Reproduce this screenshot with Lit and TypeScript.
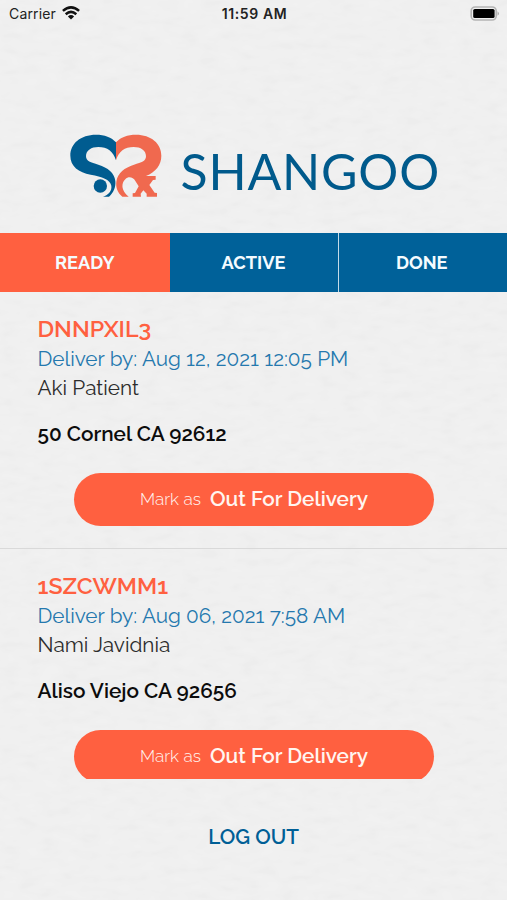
import { LitElement, html, css, svg } from "lit";
import { customElement, property, state } from "lit/decorators.js";

interface Order {
  code: string;
  due: string;
  patient: string;
  address: string;
}

const ORDERS: Order[] = [
  { code: "DNNPXIL3", due: "Aug 12, 2021 12:05 PM", patient: "Aki Patient", address: "50 Cornel CA 92612" },
  { code: "1SZCWMM1", due: "Aug 06, 2021 7:58 AM", patient: "Nami Javidnia", address: "Aliso Viejo CA 92656" },
];

@customElement("order-card")
export class OrderCard extends LitElement {
  @property({ attribute: false }) order!: Order;

  static styles = css`
    :host {
      display: block;
      box-sizing: border-box;
      height: 257px;
      padding: 22.2px 37.5px 0;
      border-bottom: 1px solid #d9d9d9;
      font-size: 20.75px;
      line-height: 29.3px;
      font-variant-numeric: oldstyle-nums;
      white-space: nowrap;
    }
    .code { color: #ff6040; font-size: 23.2px; line-height: 29.9px; font-weight: 600; }
    .due { color: #2478ae; }
    .patient { color: #2c2c2c; }
    .address { margin-top: 16.9px; color: #0c0c0c; font-weight: 600; }
    .mark {
      display: flex;
      align-items: center;
      justify-content: center;
      gap: 9px;
      width: 360px;
      height: 53px;
      margin: 24.6px 0 0 36.5px;
      padding: 0 0 2px;
      border: 0;
      border-radius: 27px;
      background: #ff6040;
      color: #fff5f0;
      font: inherit;
    }
    .lead { font-size: 17.2px; font-weight: 300; padding-top: 2px; }
    .status { font-weight: 600; }
  `;

  render() {
    const o = this.order;
    return html`
      <div class="code">${o.code}</div>
      <div class="due">Deliver by: ${o.due}</div>
      <div class="patient">${o.patient}</div>
      <div class="address">${o.address}</div>
      <button class="mark"><span class="lead">Mark as</span><span class="status">Out For Delivery</span></button>
    `;
  }
}

@customElement("app-root")
export class AppRoot extends LitElement {
  @state() private tab = "READY";

  static styles = css`
    :host {
      display: flex;
      flex-direction: column;
      position: relative;
      isolation: isolate;
      width: 507px;
      height: 900px;
      overflow: hidden;
      background: #f1f1f1;
      font-family: Raleway, Lato, "Open Sans", sans-serif;
    }
    .paper { position: absolute; inset: 0; z-index: -1; width: 100%; height: 100%; opacity: 0.013; }
    .status {
      display: grid;
      grid-template-columns: 1fr auto 1fr;
      align-items: center;
      height: 28px;
      padding: 0 7px 0 9px;
      font-family: Inter, sans-serif;
      font-size: 14px;
      color: #222;
    }
    .carrier { display: flex; align-items: center; gap: 6px; letter-spacing: 0.15px; margin-top: -1px; }
    .wifi { margin-top: -1px; }
    .clock { font-weight: 600; letter-spacing: 0.6px; margin-top: -1px; }
    .battery { justify-self: end; margin-top: -2px; }
    .brand { display: flex; height: 205px; padding-left: 60px; box-sizing: border-box; }
    .mark { margin-top: 97px; width: 110px; height: 80px; }
    .name {
      margin: 112.5px 0 0 10.5px;
      font-family: Lato, Raleway, sans-serif;
      font-size: 50px;
      line-height: 60px;
      letter-spacing: 0.8px;
      color: #005a8c;
    }
    .tabs { display: grid; grid-template-columns: 169.5px 168px 169.5px; height: 58.5px; }
    .tab {
      border: 0;
      padding: 1px 0 0;
      background: #006199;
      color: #f4fbff;
      font: 700 18.2px/58px Raleway, Lato, sans-serif;
    }
    .tab.on { background: #ff6040; }
    .tab:last-child { border-left: 1px solid #c4dbe8; padding-right: 2px; }
    .list { height: 487.5px; overflow: hidden; }
    .logout { margin: 43px auto 0; font-size: 20.6px; line-height: 30px; font-weight: 600; color: #005f96; }
  `;

  render() {
    return html`
      <svg class="paper" aria-hidden="true">
        <filter id="grain" x="0" y="0" width="100%" height="100%">
          <feTurbulence type="fractalNoise" baseFrequency="0.05 0.12" numOctaves="2" seed="4" />
          <feColorMatrix values="2 0 0 0 -0.5  2 0 0 0 -0.5  2 0 0 0 -0.5  0 0 0 0 1" />
        </filter>
        <rect width="100%" height="100%" filter="url(#grain)" />
      </svg>
      <div class="status">
        <div class="carrier"><span>Carrier</span>
          <svg class="wifi" width="18" height="14" viewBox="0 0 18 14">${svg`
            <g fill="none" stroke="#111" stroke-width="2.5"><path d="M.9 4.9Q9-2.2 17.1 4.9"/><path d="M3.7 8.2Q9 3.6 14.3 8.2"/></g>
            <path d="M5.9 10.4Q9 7.8 12.1 10.4L9 13.6Z" fill="#111"/>`}</svg>
        </div>
        <span class="clock">11:59 AM</span>
        <svg class="battery" width="30" height="15" viewBox="0 0 30 15">
          <rect x="1.2" y="1" width="25" height="13" rx="4" fill="none" stroke="#b4b4b4" stroke-width="1.6"/>
          <rect x="3.2" y="3" width="21.4" height="9" rx="1.6" fill="#000"/>
          <path d="M27.6 5.2Q30 7.5 27.6 9.8Z" fill="#999"/>
        </svg>
      </div>
      <div class="brand">
        <svg class="mark" viewBox="0 0 330 240">
          <path fill="#005c90" d="M168 52C155 37 133 29 108 29C62 29 31 55 31 92C31 124 56 142 92 149C127 155 150 163 154 182C156 198 146 209 129 215L147 215C160 204 168 187 166 168C163 143 144 128 115 119C92 113 78 108 78 94C78 76 94 66 115 66C142 66 160 79 168 106Z"/>
          <circle cx="121" cy="183" r="20" fill="#005c90"/>
          <path fill="#f0694f" d="M168 52C181 37 203 29 228 29C273 29 304 55 304 92C304 120 287 141 258 153L287 153L287 164L279 165L268 180L284 203L291 204L291 215L260 215L260 206L250 196L242 206L243 215L218 215L218 205L225 204L236 184L226 168C219 156 205 153 196 163C184 174 182 196 206 215L187 215C172 202 167 187 169 170C173 143 194 128 222 119C245 113 258 108 258 94C258 76 242 66 221 66C194 66 176 79 168 106Z"/>
        </svg>
        <span class="name">SHANGOO</span>
      </div>
      <div class="tabs">
        ${["READY", "ACTIVE", "DONE"].map((t) => html`<button class="tab ${t === this.tab ? "on" : ""}" @click=${() => (this.tab = t)}>${t}</button>`)}
      </div>
      <div class="list">${ORDERS.map((o) => html`<order-card .order=${o}></order-card>`)}</div>
      <span class="logout">LOG OUT</span>
    `;
  }
}
